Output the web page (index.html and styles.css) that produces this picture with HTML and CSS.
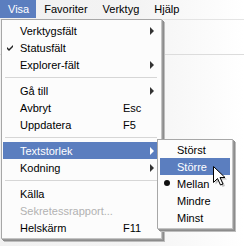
FILE: index.html
```html
<!DOCTYPE html>
<html>
<head>
<meta charset="utf-8">
<link rel="stylesheet" href="styles.css">
</head>
<body>
<div class="window">
  <div class="menubar">
    <div class="mb-item active">Visa</div>
    <div class="mb-item">Favoriter</div>
    <div class="mb-item">Verktyg</div>
    <div class="mb-item">Hjälp</div>
  </div>
  <div class="toolbar"></div>
  <div class="content"></div>

  <div class="menu main">
    <div class="item"><span class="label">Verktygsfält</span><span class="arrow"></span></div>
    <div class="item"><span class="mark"><svg width="7" height="7" viewBox="0 0 7 7"><path d="M0 3 L2 5 L6 1 L6 3 L2 7 L0 5 Z" fill="#222"/></svg></span><span class="label">Statusfält</span></div>
    <div class="item"><span class="label">Explorer-fält</span><span class="arrow"></span></div>
    <div class="sep"></div>
    <div class="item"><span class="label">Gå till</span><span class="arrow"></span></div>
    <div class="item"><span class="label">Avbryt</span><span class="key">Esc</span></div>
    <div class="item"><span class="label">Uppdatera</span><span class="key">F5</span></div>
    <div class="sep"></div>
    <div class="item hl"><span class="label">Textstorlek</span><span class="arrow"></span></div>
    <div class="item"><span class="label">Kodning</span><span class="arrow"></span></div>
    <div class="sep"></div>
    <div class="item"><span class="label">Källa</span></div>
    <div class="item disabled"><span class="label">Sekretessrapport...</span></div>
    <div class="item"><span class="label">Helskärm</span><span class="key">F11</span></div>
  </div>

  <div class="menu sub">
    <div class="item"><span class="label">Störst</span></div>
    <div class="item hl"><span class="label">Större</span></div>
    <div class="item"><span class="mark"><span class="dot"></span></span><span class="label">Mellan</span></div>
    <div class="item"><span class="label">Mindre</span></div>
    <div class="item"><span class="label">Minst</span></div>
  </div>

  <svg class="cursor" width="16" height="22" viewBox="0 0 16 22">
    <path d="M2.5 2.5 L2.5 18.5 L6.5 14.5 L9.5 21 L12 20 L9 13.5 L14 13.5 Z" fill="#888" opacity="0.5"/>
    <path d="M0.5 0.5 L0.5 16.5 L4.5 12.5 L7.5 19 L10 18 L7 11.5 L12 11.5 Z" fill="#fff" stroke="#000" stroke-width="1" stroke-linejoin="miter"/>
  </svg>
</div>
</body>
</html>
```
FILE: styles.css
```css
html, body {
  margin: 0;
  padding: 0;
}
body {
  width: 244px;
  height: 246px;
  overflow: hidden;
  font-family: "Liberation Sans", Arial, sans-serif;
  font-size: 11px;
  color: #000;
  background: #fff;
}
.window {
  position: relative;
  width: 244px;
  height: 246px;
  background: linear-gradient(to right, #f1f1f1 0%, #f3f3f3 55%, #ffffff 100%);
}
.menubar {
  display: flex;
  height: 19px;
  align-items: stretch;
}
.mb-item {
  padding: 0 7px 0 8px;
  line-height: 18px;
  height: 18px;
}
.mb-item.active {
  background: #5b7ebf;
  color: #fff;
}
.toolbar {
  height: 34px;
  border-top: 1px solid #e4e4e4;
  border-bottom: 1px solid #dcdcdc;
}
.content {
  height: 192px;
}
.menu {
  position: absolute;
  background: #fcfcfc;
  border: 1px solid #a7a7a7;
  border-right-color: #c4c4c4;
  border-bottom-color: #c4c4c4;
  box-shadow: 1px 1px 0 #9a9a9a, 2px 2px 0 #8c8c8c, 3px 3px 0 #bdbdbd;
  box-sizing: border-box;
}
.main {
  left: 1px;
  top: 19px;
  width: 161px;
  padding: 2px 3px 2px 1px;
}
.sub {
  left: 157px;
  top: 139px;
  width: 76px;
  padding: 1px 2px 2px 2px;
}
.item {
  position: relative;
  display: flex;
  align-items: center;
  height: 17px;
  padding-left: 17px;
}
.item .label {
  flex: 1;
}
.item .key {
  width: 35px;
}
.item.hl {
  background: #5b7ebf;
  color: #fff;
}
.item.disabled {
  color: #b2b2b2;
}
.mark {
  position: absolute;
  left: 4px;
  top: 5px;
  width: 7px;
  height: 7px;
  display: flex;
}
.dot {
  width: 6px;
  height: 6px;
  border-radius: 50%;
  background: #111;
}
.arrow {
  width: 0;
  height: 0;
  border-top: 4px solid transparent;
  border-bottom: 4px solid transparent;
  border-left: 4px solid #333;
  margin-right: 4px;
}
.item.hl .arrow {
  border-left-color: #fff;
}
.sep {
  height: 1px;
  background: #d6d6d6;
  margin: 4px 1px 4px 2px;
}
.cursor {
  position: absolute;
  left: 213px;
  top: 166px;
}
```
